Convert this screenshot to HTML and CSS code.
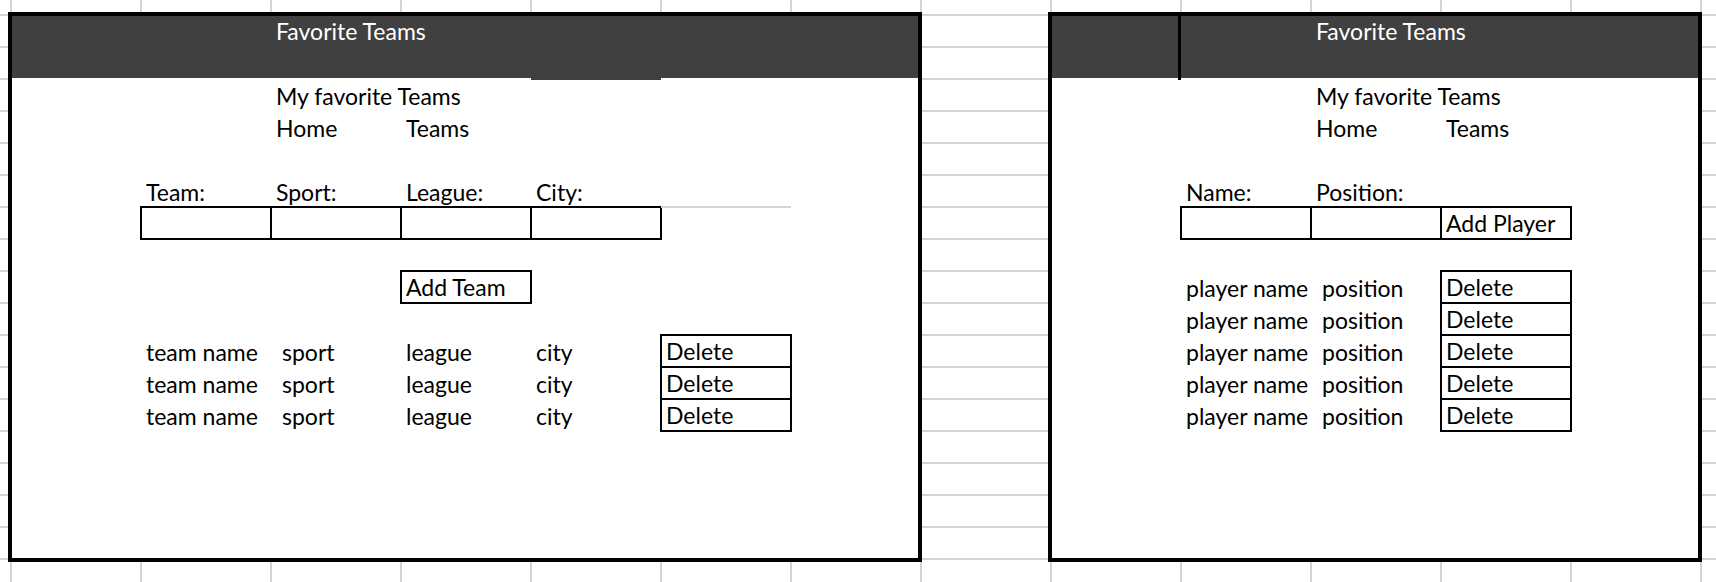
FILE: index.html
```html
<!DOCTYPE html>
<html>
<head>
	<meta charset="utf-8">
	<title>Favorite Teams - mockup</title>
	<link rel="stylesheet" href="styles.css">
</head>
<body>

<div class="sheet">

	<!-- teams page -->
	<section class="panel panel-teams">
		<div class="head"></div>
		<div class="head-notch"></div>
		<div class="cell title c2 r0">Favorite Teams</div>

		<div class="cell c2 r2">My favorite Teams</div>
		<div class="cell c2 r3">Home</div>
		<div class="cell c3 r3">Teams</div>

		<div class="cell c1 r5">Team:</div>
		<div class="cell c2 r5">Sport:</div>
		<div class="cell c3 r5">League:</div>
		<div class="cell c4 r5">City:</div>
		<div class="box c1 r6"></div>
		<div class="box c2 r6"></div>
		<div class="box c3 r6"></div>
		<div class="box c4 r6"></div>
		<div class="rule c5 r6"></div>

		<div class="box cell c3 r8">Add Team</div>

		<div class="cell c1 r10">team name</div>
		<div class="cell indent c2 r10">sport</div>
		<div class="cell c3 r10">league</div>
		<div class="cell c4 r10">city</div>
		<div class="box cell c5 r10">Delete</div>

		<div class="cell c1 r11">team name</div>
		<div class="cell indent c2 r11">sport</div>
		<div class="cell c3 r11">league</div>
		<div class="cell c4 r11">city</div>
		<div class="box cell c5 r11">Delete</div>

		<div class="cell c1 r12">team name</div>
		<div class="cell indent c2 r12">sport</div>
		<div class="cell c3 r12">league</div>
		<div class="cell c4 r12">city</div>
		<div class="box cell c5 r12">Delete</div>
	</section>

	<!-- players page -->
	<section class="panel panel-players">
		<div class="head"></div>
		<div class="head-split"></div>
		<div class="cell title c2 r0">Favorite Teams</div>

		<div class="cell c2 r2">My favorite Teams</div>
		<div class="cell c2 r3">Home</div>
		<div class="cell c3 r3">Teams</div>

		<div class="cell c1 r5">Name:</div>
		<div class="cell c2 r5">Position:</div>
		<div class="box c1 r6"></div>
		<div class="box c2 r6"></div>
		<div class="box cell c3 r6">Add Player</div>

		<div class="cell c1 r8">player name</div>
		<div class="cell indent c2 r8">position</div>
		<div class="box cell c3 r8">Delete</div>

		<div class="cell c1 r9">player name</div>
		<div class="cell indent c2 r9">position</div>
		<div class="box cell c3 r9">Delete</div>

		<div class="cell c1 r10">player name</div>
		<div class="cell indent c2 r10">position</div>
		<div class="box cell c3 r10">Delete</div>

		<div class="cell c1 r11">player name</div>
		<div class="cell indent c2 r11">position</div>
		<div class="box cell c3 r11">Delete</div>

		<div class="cell c1 r12">player name</div>
		<div class="cell indent c2 r12">position</div>
		<div class="box cell c3 r12">Delete</div>
	</section>

</div>

</body>
</html>
```

FILE: styles.css
```css
html, body {
	height: 100%;
}

body {
	margin: 0;
	background-color: #FFFFFF;
	background-image:
		linear-gradient(90deg, #D4D4D4 2px, transparent 2px),
		linear-gradient(#D4D4D4 2px, transparent 2px);
	background-size: 130px 100%, 100% 32px;
	background-position: 10px 0, 0 14px;
	font-family: 'Lato', 'Liberation Sans', sans-serif;
	font-size: 23px;
	color: #000000;
}

.sheet {
	display: flex;
	align-items: flex-start;
	gap: 126px;
	padding: 12px 0 0 8px;
}

.panel {
	display: grid;
	grid-template-rows: 31px repeat(15, 32px) 31px;
	border: 4px solid #000000;
	background-color: #FFFFFF;
}

.panel-teams {
	grid-template-columns: 129px repeat(5, 130px) 127px;
}

.panel-players {
	grid-template-columns: 129px repeat(3, 130px) 127px;
}

/* dark title band, two rows high */
.head {
	grid-column: 1 / -1;
	grid-row: 1 / 3;
	margin-bottom: 1px;
	background-color: #404040;
}

.head-notch {
	grid-column: 5;
	grid-row: 2;
	margin-bottom: -1px;
	background-color: #404040;
}

.head-split {
	grid-column: 1;
	grid-row: 1 / 3;
	margin-bottom: -1px;
	border-right: 3px solid #000000;
}

.cell {
	padding: 1px 0 0 5px;
	line-height: 32px;
	white-space: nowrap;
}

.cell.title {
	padding-top: 0;
	color: #FFFFFF;
	line-height: 31px;
}

.cell.indent {
	padding-left: 11px;
}

.box {
	margin: -1px;
	border: 2px solid #000000;
}

.box.cell {
	padding-left: 4px;
	line-height: 28px;
}

.rule {
	margin-top: -1px;
	border-top: 2px solid #D4D4D4;
}

/* spreadsheet columns */
.c1 { grid-column: 2; }
.c2 { grid-column: 3; }
.c3 { grid-column: 4; }
.c4 { grid-column: 5; }
.c5 { grid-column: 6; }

/* spreadsheet rows */
.r0 { grid-row: 1; }
.r2 { grid-row: 3; }
.r3 { grid-row: 4; }
.r5 { grid-row: 6; }
.r6 { grid-row: 7; }
.r8 { grid-row: 9; }
.r9 { grid-row: 10; }
.r10 { grid-row: 11; }
.r11 { grid-row: 12; }
.r12 { grid-row: 13; }
```
